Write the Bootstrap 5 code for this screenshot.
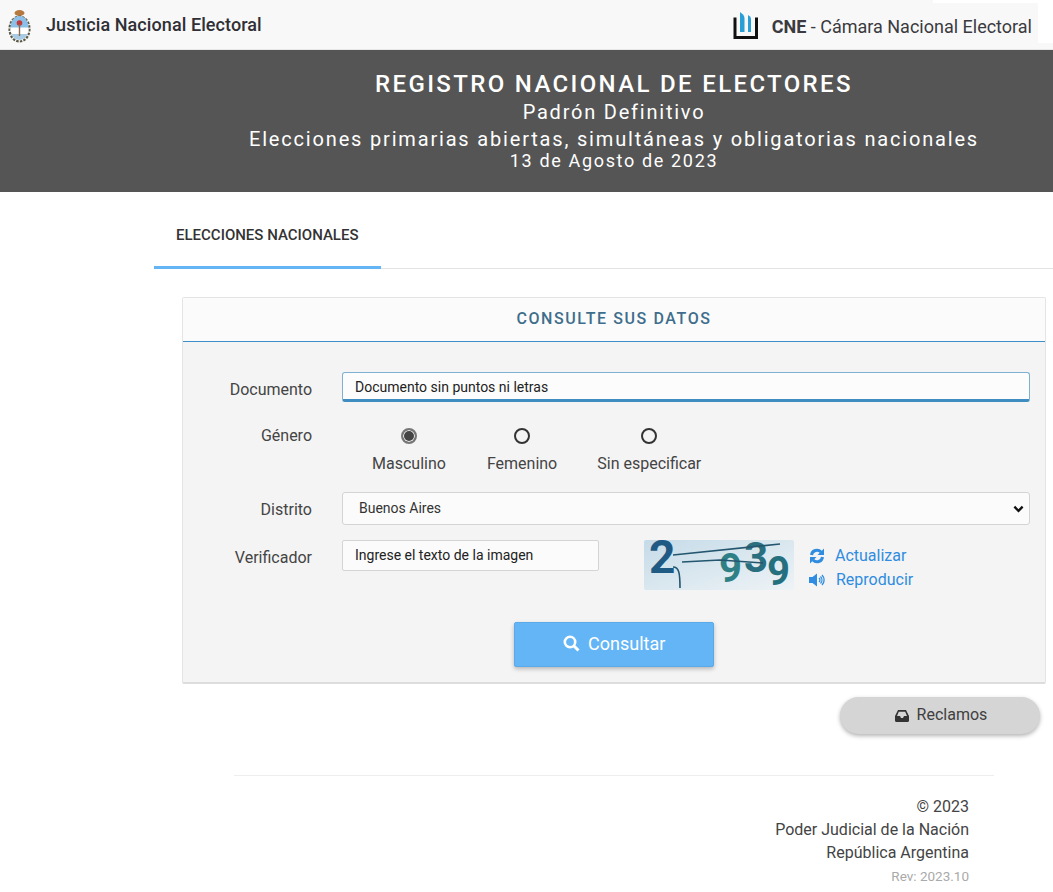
<!DOCTYPE html>
<html lang="es">
<head>
  <meta charset="UTF-8" />
  <meta name="viewport" content="width=device-width, initial-scale=1.0"/>
  <title>Registro Nacional de Electores</title>

  <link href="https://cdn.jsdelivr.net/npm/bootstrap@5.3.0/dist/css/bootstrap.min.css" rel="stylesheet"/>

  <style>
    body {
      font-family: Roboto, "Liberation Sans", sans-serif;
      color: #333;
      background: #fff;
      font-size: 16px;
    }

    .top-bar {
      height: 50px;
      background:
        linear-gradient(#f8f8f8, #f8f8f8) 933px 3px / 105px 40px no-repeat,
        linear-gradient(#fff, #fff) 933px 0 / 120px 43px no-repeat,
        #f8f8f8;
      border-bottom: 1px solid #e7e7e7;
      padding: 0 21px 0 7px;
    }

    .top-brand {
      font-size: 18px;
      font-weight: 500;
      letter-spacing: .08px;
      color: #2f2f35;
      margin-left: 14px;
    }

    .top-cne {
      font-size: 18px;
      color: #3a3a40;
      margin-left: 13px;
      margin-top: 3px;
    }

    .top-cne strong {
      font-weight: 700;
    }

    .hero {
      height: 142px;
      background: #555;
      color: #fff;
      padding-top: 22px;
      padding-left: 175px;
      text-align: center;
      line-height: 1;
    }

    .hero-title {
      font-size: 24px;
      font-weight: 500;
      letter-spacing: 2.35px;
      margin-bottom: 6px;
    }

    .hero-sub {
      font-size: 20px;
      letter-spacing: 1.78px;
      margin-bottom: 7px;
    }

    .hero-sub2 {
      font-size: 20px;
      letter-spacing: 1.82px;
      margin-bottom: 3px;
    }

    .hero-date {
      font-size: 18px;
      letter-spacing: 1.65px;
    }

    .tab-row {
      margin-left: 154px;
      height: 77px;
      border-bottom: 1px solid #e4e4e4;
    }

    .tab-item {
      width: 227px;
      height: 77px;
      padding: 35px 0 0 22px;
      font-size: 15px;
      font-weight: 500;
      line-height: 16px;
      color: #333;
      border-bottom: 3px solid #64b5f6;
    }

    .data-panel {
      margin: 28px 7px 0 182px;
      background: #f4f4f4;
      border: 1px solid #e4e4e4;
      border-bottom: 2px solid #ddd;
      border-radius: 2px;
      height: 387px;
    }

    .data-head {
      height: 44px;
      background: #fbfbfb;
      border-bottom: 1px solid #3d8fc9;
      color: #3f6e8c;
      font-size: 16px;
      font-weight: 500;
      letter-spacing: 1.6px;
      line-height: 41px;
      text-align: center;
    }

    .field-row {
      padding-right: 15px;
    }

    .row-doc {
      margin-top: 30px;
    }

    .row-gen {
      margin-top: 23px;
    }

    .row-dist {
      margin-top: 16px;
    }

    .row-ver {
      margin-top: 15px;
    }

    .field-label {
      width: 129px;
      margin-right: 30px;
      text-align: right;
      flex-shrink: 0;
      color: #444;
      font-size: 16px;
    }

    .doc-label {
      margin-top: 6px;
    }

    .gen-label {
      margin-top: -1px;
    }

    .dist-label {
      margin-top: 2px;
    }

    .ver-label {
      margin-top: 6px;
    }

    .doc-input.form-control {
      height: 30px;
      border: 1px solid #7fb0d2;
      border-bottom: 3px solid #3f8cc0;
      border-radius: 3px;
      background: #fcfcfc;
      font-size: 14px;
      color: #222;
      padding: 2px 12px 0;
    }

    .doc-input::placeholder,
    .ver-input::placeholder {
      color: #222;
      opacity: 1;
    }

    .gender-list {
      margin-left: 30px;
      gap: 40px;
    }

    .gender-opt {
      text-align: center;
      color: #444;
      font-size: 16px;
    }

    .gender-opt:first-child {
      margin-right: 1px;
    }

    .radio-dot {
      display: block;
      width: 16px;
      height: 16px;
      border: 2px solid #333;
      border-radius: 50%;
      margin: 3px auto 8px;
    }

    .radio-dot.is-on {
      border-color: #777;
      background: #444;
      box-shadow: inset 0 0 0 1px #f4f4f4;
    }

    .dist-select.form-select {
      height: 33px;
      border: 1px solid #d4d4d4;
      border-radius: 3px;
      background-color: #fbfbfb;
      background-image: url("data:image/svg+xml,%3csvg xmlns='http://www.w3.org/2000/svg' viewBox='0 0 12 8'%3e%3cpath fill='none' stroke='%23111' stroke-width='2.6' d='M1.500 1.500l4.500 4.500 4.500-4.500'/%3e%3c/svg%3e");
      background-position: right 5px center;
      background-size: 11px 8px;
      font-size: 14px;
      color: #333;
      padding: 0 12px 0 16px;
    }

    .ver-input.form-control {
      width: 257px;
      height: 31px;
      border: 1px solid #d4d4d4;
      border-radius: 2px;
      background: #fbfbfb;
      font-size: 14px;
      padding: 0 12px 2px;
      flex-shrink: 0;
    }

    .captcha-pic {
      width: 150px;
      height: 50px;
      margin-left: 45px;
      border-radius: 2px;
      flex-shrink: 0;
      overflow: visible;
      font-family: Roboto, sans-serif;
      font-weight: 700;
    }

    .captcha-links {
      margin: 4px 0 0 15px;
      line-height: 24px;
    }

    .captcha-links a {
      color: #2f8ce0;
      text-decoration: none;
      font-size: 16px;
      margin-left: 10px;
    }

    .captcha-links a.audio-link {
      margin-left: 11px;
    }

    .search-wrap {
      margin-top: 30px;
    }

    .search-btn.btn {
      width: 200px;
      height: 45px;
      background: #64b5f6;
      border: 1px solid #5aa9e8;
      border-radius: 2px;
      color: #fff;
      font-size: 18px;
      padding: 0 0 2px;
      box-shadow: 0 2px 4px rgba(0, 0, 0, .25);
    }

    .claim-btn.btn {
      width: 200px;
      height: 37px;
      background: #d5d5d5;
      border: 0;
      border-radius: 19px;
      color: #3f3f3f;
      font-size: 16px;
      padding: 0 0 2px 2px;
      box-shadow: 0 2px 4px rgba(0, 0, 0, .3);
    }

    .claim-wrap {
      margin: 13px 13px 0 0;
    }

    .page-foot {
      margin: 41px 59px 0 234px;
      border-top: 1px solid #eee;
      padding: 19px 25px 0 0;
      text-align: right;
      color: #444;
      font-size: 16px;
      line-height: 23px;
    }

    .foot-rev {
      font-size: 13.5px;
      color: #aaa;
      margin-top: 1px;
    }

    .btn-glyph {
      vertical-align: -2px;
    }
  </style>
</head>
<body>
  <div class="top-bar d-flex align-items-center justify-content-between">
    <div class="d-flex align-items-center">
      <svg width="25" height="36" viewBox="0 0 25 36">
        <ellipse cx="12.500" cy="6" rx="5" ry="3" fill="#b5793f"/>
        <ellipse cx="12.500" cy="22" rx="10" ry="12.500" fill="#fff" stroke="#5c5a48" stroke-width="2.200" stroke-dasharray="2.500 1.200"/>
        <path d="M3.500 20.500a9 11.500 0 0 1 18 0z" fill="#8cc0e8"/>
        <path d="M3.500 22h18v2h-18z" fill="#fff"/>
        <path d="M4.500 27h16a9 11 0 0 1-16 0z" fill="#a9cbe4"/>
        <circle cx="12.500" cy="16" r="2.800" fill="#c23b3b"/>
        <path d="M11.800 17h1.400v12h-1.400z" fill="#8a6a4a"/>
      </svg>
      <span class="top-brand">Justicia Nacional Electoral</span>
    </div>
    <div class="d-flex align-items-center">
      <svg width="26" height="28" viewBox="0 0 26 28">
        <path d="M2 6.500v20h21.500v-20" fill="none" stroke="#111" stroke-width="3"/>
        <path d="M7 1l3 2.500q1.500 1.500 1.500 4V21H7z" fill="#2a9fd6"/>
        <path d="M15 4l2 1.500q1 1 1 3V21h-3z" fill="#2a9fd6"/>
      </svg>
      <span class="top-cne"><strong>CNE</strong> - Cámara Nacional Electoral</span>
    </div>
  </div>

  <div class="hero">
    <div class="hero-title">REGISTRO NACIONAL DE ELECTORES</div>
    <div class="hero-sub">Padrón Definitivo</div>
    <div class="hero-sub2">Elecciones primarias abiertas, simultáneas y obligatorias nacionales</div>
    <div class="hero-date">13 de Agosto de 2023</div>
  </div>

  <div class="tab-row">
    <div class="tab-item">ELECCIONES NACIONALES</div>
  </div>

  <div class="data-panel">
    <div class="data-head">CONSULTE SUS DATOS</div>

    <div class="field-row d-flex align-items-center row-doc">
      <label class="field-label doc-label">Documento</label>
      <input class="form-control doc-input" placeholder="Documento sin puntos ni letras">
    </div>

    <div class="field-row d-flex row-gen">
      <label class="field-label gen-label">Género</label>
      <div class="d-flex gender-list">
        <div class="gender-opt"><span class="radio-dot is-on"></span>Masculino</div>
        <div class="gender-opt"><span class="radio-dot"></span>Femenino</div>
        <div class="gender-opt"><span class="radio-dot"></span>Sin especificar</div>
      </div>
    </div>

    <div class="field-row d-flex align-items-center row-dist">
      <label class="field-label dist-label">Distrito</label>
      <select class="form-select dist-select"><option>Buenos Aires</option></select>
    </div>

    <div class="field-row d-flex align-items-start row-ver">
      <label class="field-label ver-label">Verificador</label>
      <input class="form-control ver-input" placeholder="Ingrese el texto de la imagen">
      <svg class="captcha-pic" viewBox="0 0 150 50">
        <defs>
          <linearGradient id="capbg" x1="0" y1="0" x2="1" y2="1">
            <stop offset="0" stop-color="#c5dbe8"/>
            <stop offset="1" stop-color="#eef3f6"/>
          </linearGradient>
        </defs>
        <rect width="150" height="50" rx="2" fill="url(#capbg)"/>
        <text x="5" y="33" font-size="46" fill="#1f5a85">2</text>
        <text x="75" y="42" font-size="40" fill="#2f7f86">9</text>
        <text x="100" y="32" font-size="42" fill="#2a6f80">3</text>
        <text x="123" y="45" font-size="40" fill="#24707f">9</text>
        <path d="M29 15L136 4M38 22l38-2 43 3M29 27c6 0 7 6 7 21" fill="none" stroke="#24566f" stroke-width="1.600"/>
      </svg>
      <div class="captcha-links">
        <div class="d-flex align-items-center">
          <svg width="16" height="16" viewBox="0 0 16 16" fill="none" stroke="#2f8ce0" stroke-width="3">
            <path d="M2.500 7a5.500 5.500 0 0 1 9.500-3"/>
            <path d="M13.500 9A5.500 5.500 0 0 1 4 12"/>
            <path d="M15 .5v6.500H8.500zM1 15.500V9h6.500z" fill="#2f8ce0" stroke="none"/>
          </svg>
          <a href="#">Actualizar</a>
        </div>
        <div class="d-flex align-items-center">
          <svg width="16" height="16" viewBox="0 0 16 16">
            <path d="M0 5h3.500L8 1.500v13L3.500 11H0z" fill="#2f8ce0"/>
            <path d="M10 6a2.500 2.500 0 0 1 0 4M11.500 4.500a5 5 0 0 1 0 7M13 3a7 7 0 0 1 0 10" fill="none" stroke="#2f8ce0" stroke-width="1.300"/>
          </svg>
          <a href="#" class="audio-link">Reproducir</a>
        </div>
      </div>
    </div>

    <div class="text-center search-wrap">
      <button class="btn search-btn">
        <svg width="17" height="17" viewBox="0 0 17 17" class="me-1 btn-glyph" fill="none" stroke="#fff">
          <circle cx="7" cy="7" r="5.200" stroke-width="2.600"/>
          <path d="M11 11l4.500 4.500" stroke-width="3"/>
        </svg>
        Consultar
      </button>
    </div>
  </div>

  <div class="claim-wrap d-flex justify-content-end">
    <button class="btn claim-btn">
      <svg width="14" height="12" viewBox="0 0 14 12" class="me-1 btn-glyph">
        <path d="M3 0h8l3 6v4.500a1.500 1.500 0 0 1-1.500 1.500h-11A1.500 1.500 0 0 1 0 10.500V6zM3.800 1.800L2 6h3l1 2h2l1-2h3l-1.800-4.200z" fill="#333" fill-rule="evenodd"/>
      </svg>
      Reclamos
    </button>
  </div>

  <div class="page-foot">
    <div>© 2023</div>
    <div>Poder Judicial de la Nación</div>
    <div>República Argentina</div>
    <div class="foot-rev">Rev: 2023.10</div>
  </div>
</body>
</html>
